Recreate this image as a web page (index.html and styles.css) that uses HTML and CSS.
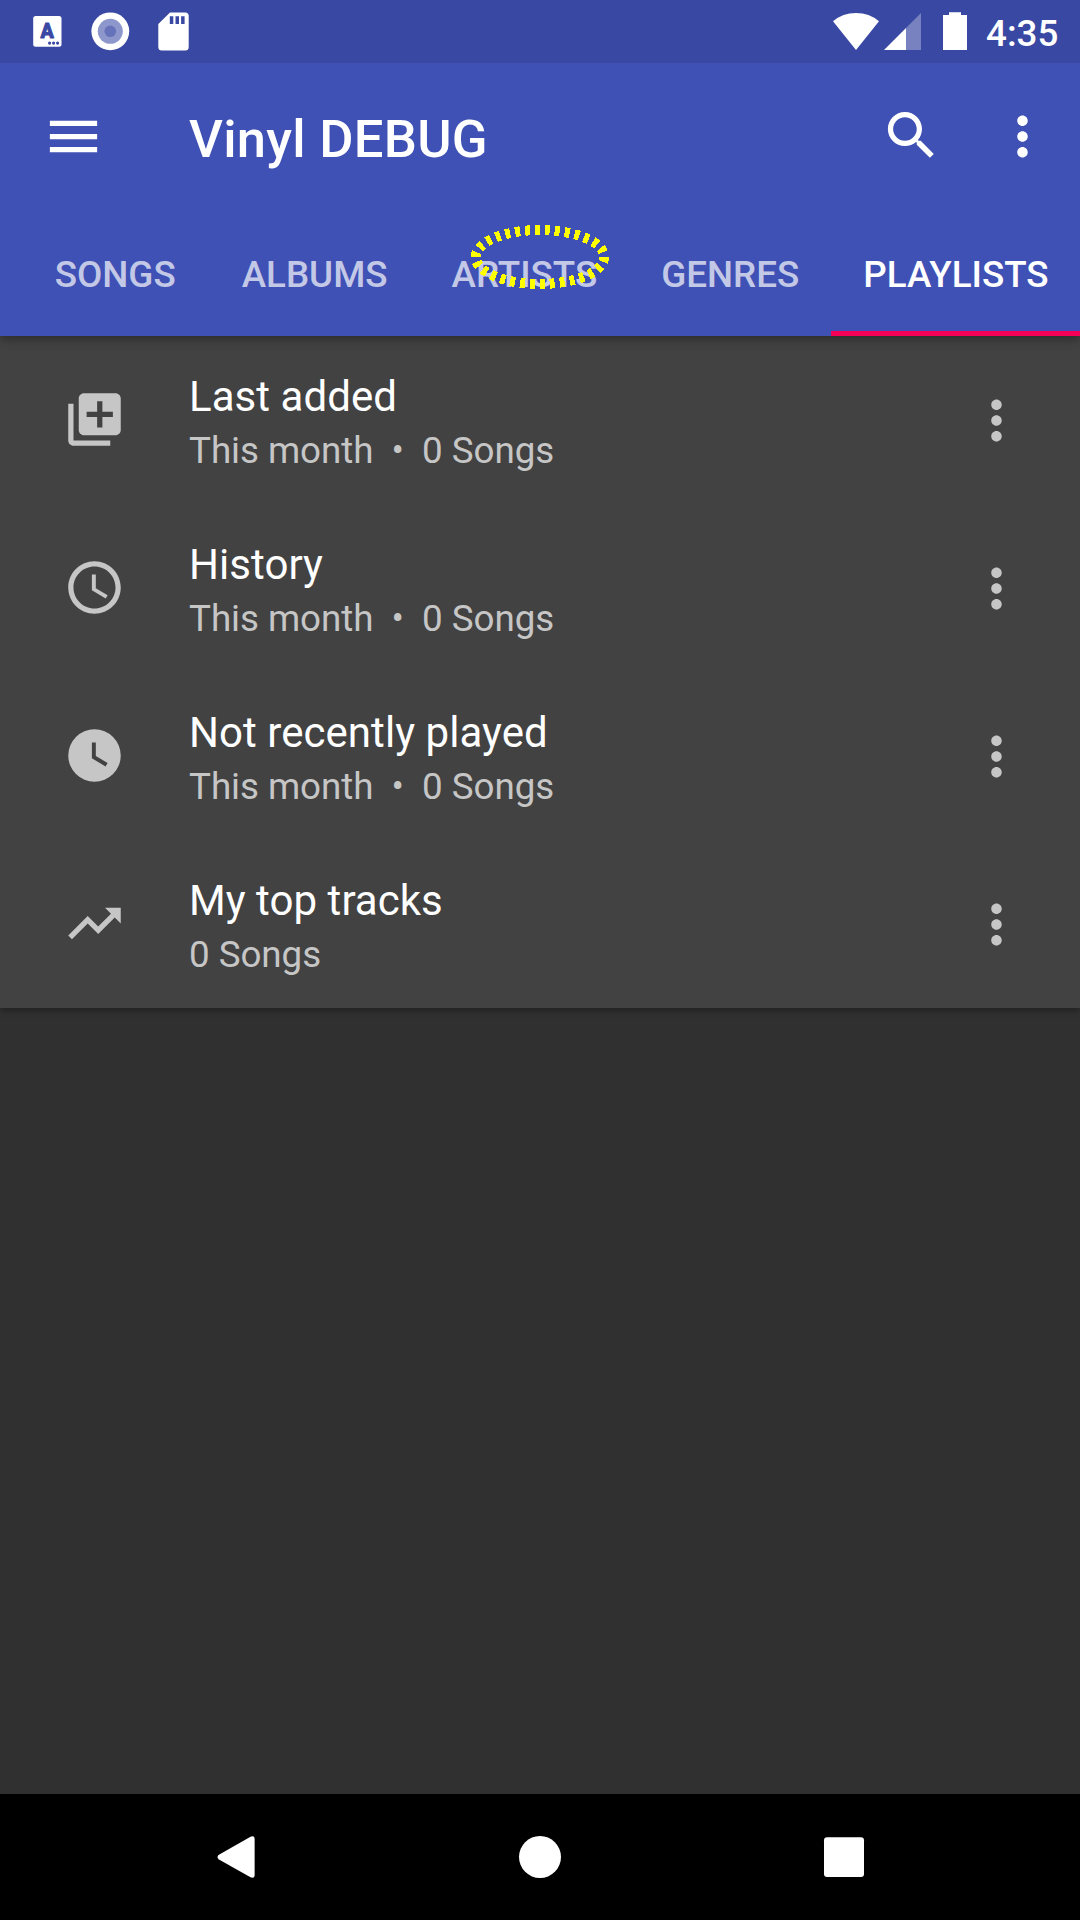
FILE: index.html
```html
<!DOCTYPE html>
<html lang="en">
<head>
<meta charset="utf-8">
<title>Vinyl DEBUG</title>
<link rel="stylesheet" href="styles.css">
</head>
<body>
<svg class="defs" width="0" height="0">
  <symbol id="more" viewBox="0 0 24 24"><path d="M12 8c1.1 0 2-.9 2-2s-.9-2-2-2-2 .9-2 2 .9 2 2 2zm0 2c-1.1 0-2 .9-2 2s.9 2 2 2 2-.9 2-2-.9-2-2-2zm0 6c-1.1 0-2 .9-2 2s.9 2 2 2 2-.9 2-2-.9-2-2-2z"/></symbol>
</svg>
<div class="screen">
  <header class="appbar">
    <div class="status">
      <div class="notifications">
        <svg width="63" height="63" viewBox="16 0 63 63"><rect x="33.2" y="16" width="28.3" height="30.7" rx="2.5" fill="#fff"/><text class="badge-letter" x="47.2" y="38" text-anchor="middle">A</text><g fill="#3948a2"><circle cx="49.6" cy="43.1" r="1.6"/><circle cx="53.6" cy="43.1" r="1.6"/><circle cx="57.6" cy="43.1" r="1.6"/></g></svg>
        <svg width="63" height="63" viewBox="79 0 63 63"><circle cx="110.3" cy="31.3" r="18.9" fill="#fff"/><circle cx="110.3" cy="31.3" r="12.5" fill="#8d97cc"/><circle cx="110.3" cy="31.3" r="5.8" fill="#6672b9"/></svg>
        <svg width="63" height="63" viewBox="142 0 63 63"><path fill="#fff" fill-rule="evenodd" d="M170 12.6h15.2a3.5 3.5 0 0 1 3.5 3.5v30.8a3.5 3.5 0 0 1-3.5 3.5h-23.4a3.5 3.5 0 0 1-3.5-3.5V24zM169.8 16.3v7.6h3.5v-7.6zM175.5 16.3v7.6h3.5v-7.6zM181.1 16.3v7.6h3.5v-7.6z"/></svg>
      </div>
      <div class="system">
        <svg width="46" height="63" viewBox="833 0 46 63"><path fill="#fff" d="M833 21.3Q842.5 13 856 13t23 8.3L856 50z"/></svg>
        <svg class="signal" width="37" height="63" viewBox="884 0 37 63"><path fill="#fff" d="M884 50l22-22v22z"/><path fill="#7882c0" d="M906 28l15-15v37h-15z"/></svg>
        <svg class="battery" width="24" height="63" viewBox="943 0 24 63"><path fill="#fff" d="M943 15h6v-2.7h12V15h6v35h-24z"/></svg>
        <span class="clock">4:35</span>
      </div>
    </div>
    <div class="toolbar">
      <svg class="icon" viewBox="0 0 24 24"><path d="M3 18h18v-2H3v2zm0-5h18v-2H3v2zm0-7v2h18V6H3z"/></svg>
      <h1 class="title">Vinyl DEBUG</h1>
      <svg class="icon search" viewBox="0 0 24 24"><path d="M15.5 14h-.79l-.28-.27C15.41 12.59 16 11.11 16 9.5 16 5.91 13.09 3 9.5 3S3 5.91 3 9.5 5.91 16 9.5 16c1.61 0 3.09-.59 4.23-1.57l.27.28v.79l5 4.99L20.49 19l-4.99-5zm-6 0C7.01 14 5 11.99 5 9.5S7.01 5 9.5 5 14 7.01 14 9.5 11.99 14 9.5 14z"/></svg>
      <svg class="icon overflow"><use href="#more"/></svg>
    </div>
    <nav class="tabs">
      <span class="tab">SONGS</span>
      <span class="tab">ALBUMS</span>
      <span class="tab">ARTISTS</span>
      <span class="tab">GENRES</span>
      <span class="tab active">PLAYLISTS</span>
    </nav>
    <svg class="touch-ring" width="144" height="70" viewBox="468 222 144 70"><ellipse cx="539.9" cy="257" rx="64.3" ry="27" pathLength="300" fill="none" stroke="#ff0" stroke-width="10" stroke-dasharray="5 5" shape-rendering="crispEdges"/></svg>
  </header>
  <main class="list">
    <div class="row">
      <svg class="icon kind" viewBox="0 0 24 24"><path d="M4 6H2v14c0 1.100.9 2 2 2h14v-2H4V6zm16-4H8c-1.100 0-2 .9-2 2v12c0 1.100.9 2 2 2h12c1.100 0 2-.9 2-2V4c0-1.100-.9-2-2-2zm-1 9h-4v4h-2v-4H9V9h4V5h2v4h4v2z"/></svg>
      <div class="text"><div class="name">Last added</div><div class="info">This month  •  0 Songs</div></div>
      <svg class="icon"><use href="#more"/></svg>
    </div>
    <div class="row">
      <svg class="icon kind" viewBox="0 0 24 24"><path d="M11.990 2C6.470 2 2 6.480 2 12s4.470 10 9.990 10C17.520 22 22 17.520 22 12S17.520 2 11.990 2zM12 20c-4.420 0-8-3.580-8-8s3.580-8 8-8 8 3.580 8 8-3.580 8-8 8zm.5-13H11v6l5.250 3.150.75-1.230-4.500-2.670z"/></svg>
      <div class="text"><div class="name">History</div><div class="info">This month  •  0 Songs</div></div>
      <svg class="icon"><use href="#more"/></svg>
    </div>
    <div class="row">
      <svg class="icon kind" viewBox="0 0 24 24"><path fill-rule="evenodd" d="M12 2a10 10 0 1 0 0 20 10 10 0 0 0 0-20zM16.200 16.200L11 13V7h1.500v5.200l4.500 2.700z"/></svg>
      <div class="text"><div class="name">Not recently played</div><div class="info">This month  •  0 Songs</div></div>
      <svg class="icon"><use href="#more"/></svg>
    </div>
    <div class="row">
      <svg class="icon kind" viewBox="0 0 24 24"><path d="M16 6l2.290 2.290-4.880 4.880-4-4L2 16.590 3.410 18l6-6 4 4 6.300-6.290L22 12V6z"/></svg>
      <div class="text"><div class="name">My top tracks</div><div class="info">0 Songs</div></div>
      <svg class="icon"><use href="#more"/></svg>
    </div>
  </main>
  <footer class="navbar">
    <svg width="42" height="42" viewBox="0 0 42 42"><path d="M3.500 19L35.500.7Q39.600-.8 39.600 3v36q0 3.800-4.100 2.300L3.500 23.200Q1.500 21.100 3.500 19z"/></svg>
    <svg width="42" height="42" viewBox="0 0 42 42"><circle cx="21" cy="21" r="21"/></svg>
    <svg width="42" height="42" viewBox="0 0 42 42"><rect x="1" y="1.200" width="40" height="39.800" rx="3"/></svg>
  </footer>
</div>
</body>
</html>
```
FILE: styles.css
```css
* { box-sizing: border-box; }
body { margin: 0; background: #303030; font-family: Roboto, sans-serif; }
svg { display: block; flex: none; }
.defs { position: absolute; }
.screen { width: 1080px; height: 1920px; display: flex; flex-direction: column; overflow: hidden; }
.icon { width: 63px; height: 63px; fill: currentColor; }

.appbar { position: relative; z-index: 1; background: #3f51b5; color: #fff; box-shadow: 0 3px 10px rgba(0, 0, 0, .36); }
.status { height: 63px; display: flex; justify-content: space-between; background: #3948a2; }
.notifications { display: flex; padding-left: 16px; }
.badge-letter { font: 900 19.500px Roboto, sans-serif; fill: #3948a2; stroke: #3948a2; stroke-width: .8px; stroke-linejoin: round; }
.system { display: flex; padding-right: 21px; }
.signal { margin-left: 5px; }
.battery { margin-left: 22px; }
.clock { width: 73px; margin-left: 19px; padding-top: 3px; font-size: 36.750px; font-weight: 500; line-height: 61px; }

.toolbar { height: 147px; padding: 0 26px 0 42px; display: flex; align-items: center; }
.title { flex: 1; margin: 0; padding: 4px 0 0 84px; font-size: 52.500px; font-weight: 500; line-height: 62px; letter-spacing: .27px; }
.search { margin: 0 48px 2px 0; }

.tabs { height: 126px; display: flex; justify-content: flex-end; }
.tab { padding: 3px 32px 0; font-size: 36.750px; font-weight: 500; line-height: 123px; text-align: center; color: rgba(255, 255, 255, .7); min-width: 189px; }
.tab.active { padding: 3px 31.500px 0 32px; color: #fff; box-shadow: inset 0 -5px #f50057; }
.touch-ring { position: absolute; left: 468px; top: 222px; }

.list { background: #424242; box-shadow: 0 3px 6px rgba(0, 0, 0, .3); }
.row { height: 168px; padding: 0 52px 0 63px; display: flex; align-items: center; color: #c6c6c6; }
.kind { margin-bottom: 2px; }
.text { flex: 1; align-self: flex-start; padding: 33px 0 0 63px; }
.name { font-size: 42px; line-height: 56px; letter-spacing: .05px; color: #fff; }
.info { font-size: 36.750px; line-height: 51px; letter-spacing: -.05px; white-space: pre; }

.navbar { height: 126px; margin-top: auto; display: flex; justify-content: center; align-items: center; gap: 262px; background: #000; fill: #fff; }
```
